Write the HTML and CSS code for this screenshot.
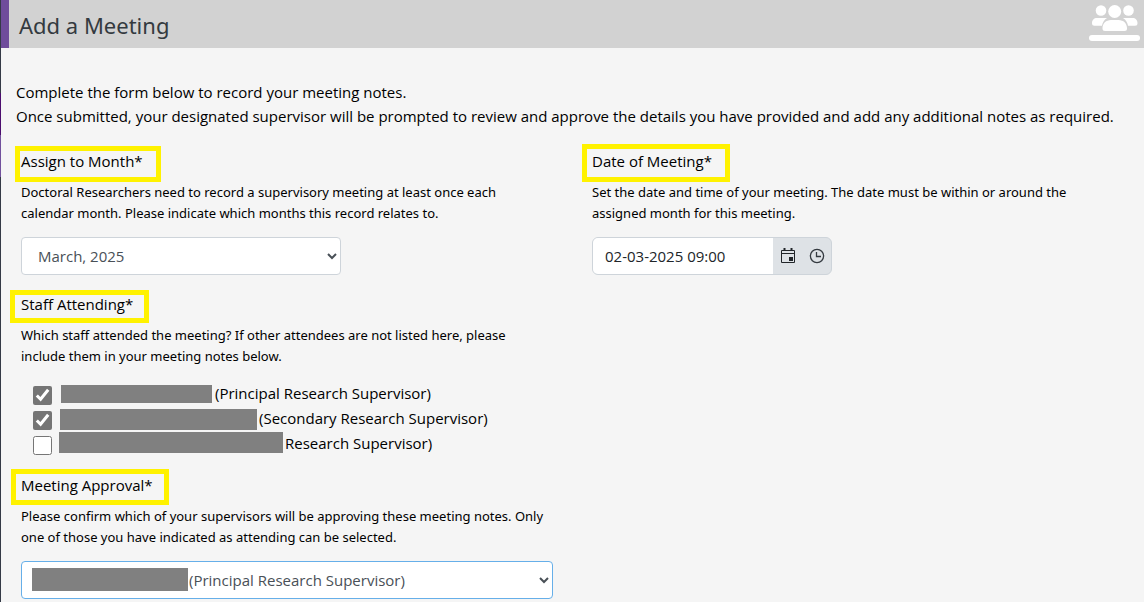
FILE: index.html
```html
<!DOCTYPE html>
<html lang="en">
<head>
<meta charset="utf-8">
<meta name="viewport" content="width=device-width, initial-scale=1">
<title>Add a Meeting</title>
<link rel="stylesheet" href="styles.css">
</head>
<body>
<div class="page">
  <header class="page-header">
    <h1 class="page-title">Add a Meeting</h1>
    <svg class="header-icon" viewBox="0 0 55 48" fill="#fff" aria-hidden="true">
      <circle cx="12" cy="10.500" r="5.300"/>
      <circle cx="39.500" cy="10.500" r="5.300"/>
      <path d="M8 18h10c-3 2-4.500 4.500-5 7.800H5.500A2.500 2.500 0 0 1 3 23.300C3 20 5 18 8 18z"/>
      <path d="M43.500 18H34c3 2 4.500 4.500 5 7.800h7a2.500 2.500 0 0 0 2.500-2.500c0-3.300-2-5.300-5-5.300z"/>
      <circle cx="25.700" cy="11.500" r="7.500" fill="#d2d2d2"/>
      <circle cx="25.700" cy="11.500" r="6.500"/>
      <path d="M22 20h7.500c5 0 8.500 3.600 8.500 8v.5a2.500 2.500 0 0 1-2.500 2.500h-19.500A2.500 2.500 0 0 1 13.500 28.500V28c0-4.400 3.500-8 8.500-8z"/>
      <rect x="0" y="35" width="51" height="6" rx="3"/>
    </svg>
  </header>
  <main class="content">
    <p class="intro">Complete the form below to record your meeting notes.<br>Once submitted, your designated supervisor will be prompted to review and approve the details you have provided and add any additional notes as required.</p>
    <form class="form-grid">
      <div class="field">
        <label class="field-label mark-month" for="month">Assign to Month*</label>
        <p class="help">Doctoral Researchers need to record a supervisory meeting at least once each calendar month. Please indicate which months this record relates to.</p>
        <select class="control select-month" id="month"><option>March, 2025</option></select>
      </div>
      <div class="field">
        <label class="field-label mark-date" for="date">Date of Meeting*</label>
        <p class="help">Set the date and time of your meeting. The date must be within or around the assigned month for this meeting.</p>
        <div class="date-group">
          <input class="date-input" id="date" type="text" value="02-03-2025 09:00">
          <button class="icon-button" type="button" aria-label="Choose date">
            <svg width="16" height="16" viewBox="0 0 16 16" fill="none" stroke="#212529" aria-hidden="true"><path d="M1.500 2.500h13v12h-13zM1 5.500h14"/><path d="M4.500 0v3M11.500 0v3" stroke-width="2"/><path d="M9 9h4v4H9z" fill="#212529" stroke="none"/></svg>
          </button>
          <button class="icon-button" type="button" aria-label="Choose time">
            <svg width="16" height="16" viewBox="0 0 16 16" fill="none" stroke="#343a40" stroke-width="1.300" aria-hidden="true"><circle cx="8" cy="8" r="6.600"/><path d="M7.500 4v4.500H12"/></svg>
          </button>
        </div>
      </div>
      <fieldset class="field staff">
        <legend class="field-label mark-staff">Staff Attending*</legend>
        <p class="help">Which staff attended the meeting? If other attendees are not listed here, please include them in your meeting notes below.</p>
        <div class="staff-list">
          <label class="staff-row"><input class="check" type="checkbox" checked><span class="redacted name-one"></span><span>(Principal Research Supervisor)</span></label>
          <label class="staff-row"><input class="check" type="checkbox" checked><span class="redacted name-two"></span><span>(Secondary Research Supervisor)</span></label>
          <label class="staff-row"><input class="check" type="checkbox"><span class="redacted name-three"></span><span>Research Supervisor)</span></label>
        </div>
      </fieldset>
      <div class="field approval">
        <label class="field-label mark-approval" for="approver">Meeting Approval*</label>
        <p class="help">Please confirm which of your supervisors will be approving these meeting notes. Only one of those you have indicated as attending can be selected.</p>
        <div class="approver">
          <select class="control select-approver" id="approver"><option>(Principal Research Supervisor)</option></select>
          <span class="redacted approver-name"></span>
        </div>
      </div>
    </form>
  </main>
</div>
</body>
</html>
```
FILE: styles.css
```css
* {
  box-sizing: border-box;
}

body {
  margin: 0;
  background: #f5f5f5;
  color: #000;
  font-family: "Open Sans", "Noto Sans", sans-serif;
  font-size: 15px;
  line-height: 24px;
}

.page {
  min-height: 100vh;
  padding-left: 1px;
  background: linear-gradient(#343a46 93px, #4b0d6e 93px 135px, #71509c 135px 177px, #343a46 177px) left top / 1px 100% no-repeat;
}

.page-header {
  display: flex;
  align-items: center;
  justify-content: space-between;
  height: 48px;
  padding-left: 10px;
  border-left: 8px solid #6f4c9b;
  background: #d2d2d2;
}

.page-title {
  margin: 0;
  padding-top: 2px;
  color: #343a40;
  font-family: "Noto Sans", sans-serif;
  font-size: 22px;
  font-weight: 400;
  line-height: 32px;
}

.header-icon {
  width: 55px;
  height: 48px;
}

.content {
  padding: 32px 15px 3px;
}

.intro {
  margin: 0 0 21px;
}

.form-grid {
  display: grid;
  grid-template-columns: 1fr 1fr;
  gap: 17px 39px;
  padding: 0 5px;
}

.field {
  min-width: 0;
  margin: 0;
  padding: 0;
  border: 0;
}

.staff,
.approval {
  grid-column: 1;
}

.field-label {
  position: relative;
  display: block;
  width: fit-content;
  padding: 0;
}

.field-label::after {
  content: "";
  position: absolute;
  box-sizing: border-box;
  border: 5px solid #fff200;
  pointer-events: none;
}

.mark-month::after {
  top: -3px;
  left: -6px;
  width: 146px;
  height: 36px;
}

.mark-date::after {
  top: -5px;
  left: -10px;
  width: 148px;
  height: 38px;
}

.mark-staff::after {
  top: -2px;
  left: -11px;
  width: 139px;
  height: 33px;
}

.mark-approval::after {
  top: -4px;
  left: -10px;
  width: 158px;
  height: 36px;
}

.help {
  max-width: 526px;
  margin: 9px 0 13px;
  font-family: "Noto Sans", sans-serif;
  font-size: 13px;
  line-height: 21px;
}

.control {
  display: block;
  height: 38px;
  border: 1px solid #ced4da;
  border-radius: 4px;
  background: #fff;
  color: #495057;
  font: inherit;
}

.select-month {
  width: 320px;
  max-width: 100%;
  padding-left: 12px;
}

.date-group {
  display: flex;
  width: 240px;
  height: 38px;
  overflow: hidden;
  border: 1px solid #ced4da;
  border-radius: 6px;
  background: #dee2e6;
}

.date-input {
  flex: 1;
  min-width: 0;
  padding: 0 12px;
  border: 0;
  background: #fff;
  color: #212529;
  font: inherit;
}

.icon-button {
  display: flex;
  align-items: center;
  justify-content: center;
  width: 29px;
  padding: 0;
  border: 0;
  background: transparent;
}

.staff-list {
  padding: 1px 0 0 12px;
}

.staff-row {
  display: flex;
  height: 25px;
}

.check {
  flex: none;
  width: 19px;
  height: 19px;
  margin: 5px 8px 0 0;
  accent-color: #757575;
}

.redacted {
  flex: none;
  background: #808080;
}

.name-one {
  width: 151px;
  height: 18px;
  margin: 4px 3px 0 1px;
}

.name-two {
  width: 197px;
  height: 21px;
  margin: 3px 2px 0 0;
}

.name-three {
  width: 224px;
  height: 21px;
  margin: 1px 2px 0 -1px;
}

.approver {
  position: relative;
}

.select-approver {
  width: 100%;
  padding-left: 163px;
  border-color: #66afe9;
}

.approver-name {
  position: absolute;
  top: 7px;
  left: 11px;
  width: 156px;
  height: 23px;
  pointer-events: none;
}
```
